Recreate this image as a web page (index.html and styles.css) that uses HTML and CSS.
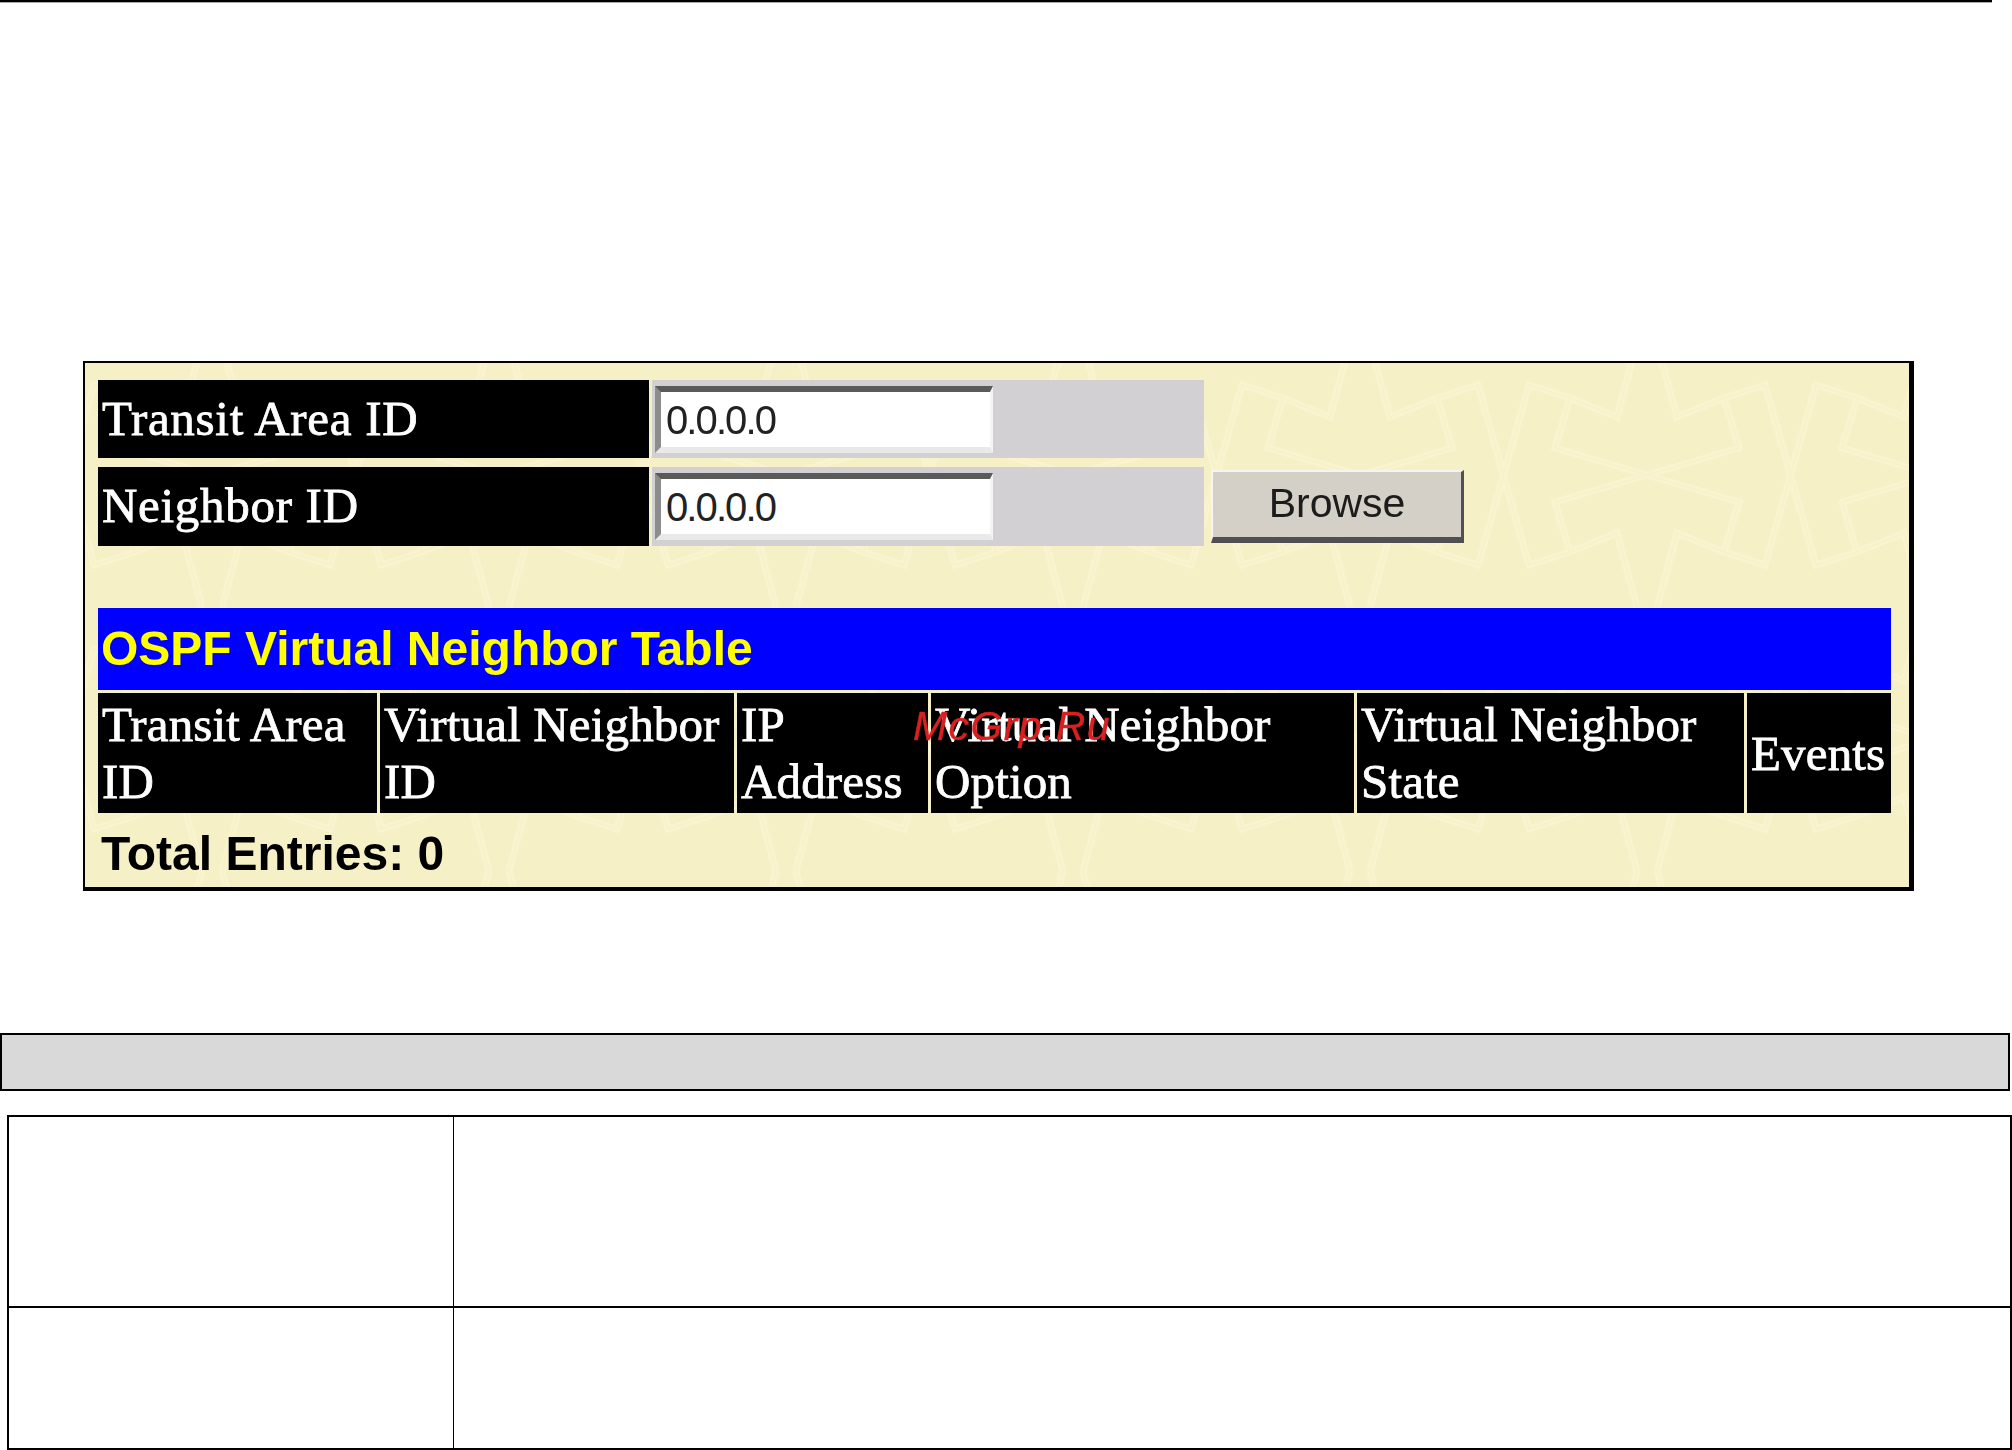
FILE: index.html
```html
<!DOCTYPE html>
<html lang="en">
<head>
<meta charset="utf-8">
<title>OSPF Virtual Neighbor Table</title>
<link rel="stylesheet" href="styles.css">
</head>
<body>
<div class="top-rule"></div>
<section class="panel">
  <div class="panel-inner">
    <svg class="wallpaper" width="100%" height="100%" aria-hidden="true">
      <defs>
        <g id="quad">
          <path d="M0 0 L-92 -27 L-77 -77 L-118 -90 L-143.5 0 M-77 -77 L-30 -58 L-10 -132"/>
        </g>
        <g id="motif">
          <use href="#quad"/>
          <use href="#quad" transform="scale(-1 1)"/>
          <use href="#quad" transform="scale(1 -1)"/>
          <use href="#quad" transform="scale(-1 -1)"/>
        </g>
        <pattern id="tile" x="270.5" y="-20" width="287" height="264" patternUnits="userSpaceOnUse">
          <g transform="translate(143.5 132)" fill="none" stroke-linejoin="miter">
            <use href="#motif" stroke="#f9f4cf" stroke-width="7"/>
            <use href="#motif" stroke="#f6f1c9" stroke-width="1.6"/>
          </g>
        </pattern>
      </defs>
      <rect width="100%" height="100%" fill="url(#tile)"/>
    </svg>
    <div class="content">
      <div class="form-row">
        <div class="label">Transit Area ID</div>
        <div class="field"><input class="text-input" type="text" value="0.0.0.0"></div>
      </div>
      <div class="form-row second">
        <div class="label">Neighbor ID</div>
        <div class="field"><input class="text-input" type="text" value="0.0.0.0"></div>
        <button class="browse" type="button">Browse</button>
      </div>
      <h2 class="table-title">OSPF Virtual Neighbor Table</h2>
      <div class="table-head">
        <div class="th">Transit Area<br>ID</div>
        <div class="th">Virtual Neighbor<br>ID</div>
        <div class="th">IP<br>Address</div>
        <div class="th">Virtual Neighbor<br>Option</div>
        <div class="th">Virtual Neighbor<br>State</div>
        <div class="th">Events</div>
      </div>
      <div class="total">Total Entries: 0</div>
    </div>
  </div>
  <div class="watermark">McGrp.Ru</div>
</section>
<div class="doc-bar"></div>
<div class="doc-table">
  <div class="doc-cell name first"></div>
  <div class="doc-cell first"></div>
  <div class="doc-cell name"></div>
  <div class="doc-cell"></div>
</div>
</body>
</html>
```
FILE: styles.css
```css
html, body {
  margin: 0;
  padding: 0;
  background: #fff;
}
body {
  width: 2012px;
  height: 1450px;
  overflow: hidden;
  font-family: "Liberation Sans", Arial, sans-serif;
}
.top-rule {
  width: 1992px;
  height: 2px;
  background: #000;
  border-bottom: 1px solid #aaa;
}
.panel {
  position: relative;
  box-sizing: border-box;
  width: 1831px;
  height: 530px;
  margin: 358px 0 0 83px;
  border-style: solid;
  border-color: #000;
  border-width: 2px 5px 4px 2px;
  background: #f5f0c6;
  overflow: hidden;
}
.panel-inner {
  position: relative;
  width: 100%;
  height: 100%;
  filter: blur(0.7px);
}
.wallpaper {
  position: absolute;
  left: 0;
  top: 0;
}
.content {
  position: relative;
  box-sizing: border-box;
  height: 100%;
  padding: 17px 18px 0 13px;
}
.form-row {
  display: grid;
  grid-template-columns: 551px 552px 253px;
  column-gap: 3px;
  height: 78px;
  align-items: stretch;
}
.form-row.second {
  height: 79px;
  margin-top: 9px;
}
.label {
  background: #000;
  color: #fff;
  font: 49px/78px "Liberation Serif", "Times New Roman", serif;
  padding-left: 4px;
  letter-spacing: 0.7px;
  -webkit-text-stroke: 0.8px #fff;
}
.field {
  background: #d3d0d3;
  padding: 6px 0 0 3px;
}
.text-input {
  display: block;
  box-sizing: border-box;
  width: 338px;
  height: 67px;
  margin: 0;
  padding: 1px 0 0 5px;
  border-style: solid;
  border-width: 6px 3px 6px 6px;
  border-color: #5a5a5a #f4f4f2 #e9e9e9 #8c8c8c;
  border-radius: 0;
  outline: none;
  background: #fff;
  color: #222;
  font: 40px "Liberation Sans", Arial, sans-serif;
  letter-spacing: -1.9px;
}
.browse {
  box-sizing: border-box;
  align-self: center;
  width: 253px;
  height: 73px;
  margin: 0 0 0 4px;
  padding: 0 0 2px;
  border-style: solid;
  border-width: 2px 3px 6px 2px;
  border-color: #f6f5f2 #505050 #505050 #f6f5f2;
  border-radius: 0;
  background: #d4d0c8;
  color: #1c1c1c;
  font: 41px "Liberation Sans", Arial, sans-serif;
}
.table-title {
  height: 82px;
  margin: 62px 0 0;
  padding-left: 3px;
  background: #0000ff;
  color: #ffff00;
  font: bold 48px/81px "Liberation Sans", Arial, sans-serif;
}
.table-head {
  display: grid;
  grid-template-columns: 279px 354px 191px 423px 387px 144px;
  column-gap: 3px;
  margin-top: 3px;
  height: 120px;
}
.th {
  display: flex;
  align-items: center;
  box-sizing: border-box;
  padding-left: 4px;
  background: #000;
  color: #fff;
  font: 49px/57px "Liberation Serif", "Times New Roman", serif;
  letter-spacing: 0.15px;
  -webkit-text-stroke: 0.8px #fff;
}
.total {
  padding: 13px 0 0 3px;
  color: #000;
  font: bold 48px/56px "Liberation Sans", Arial, sans-serif;
}
.watermark {
  position: absolute;
  left: 828px;
  top: 343px;
  color: #d92020;
  font: italic 41px/1 "Liberation Sans", Arial, sans-serif;
  letter-spacing: 1.4px;
  -webkit-text-stroke: 0.4px #d92020;
  white-space: nowrap;
}
.doc-bar {
  box-sizing: border-box;
  width: 2010px;
  height: 58px;
  margin-top: 142px;
  border: 2px solid #000;
  background: #d9d9d9;
}
.doc-table {
  box-sizing: border-box;
  display: grid;
  grid-template-columns: 445px 1fr;
  grid-template-rows: 191px 140px;
  width: 2005px;
  height: 335px;
  margin: 24px 0 0 7px;
  border: 2px solid #000;
}
.doc-cell.first {
  border-bottom: 2px solid #000;
}
.doc-cell.name {
  border-right: 1px solid #000;
}
```
